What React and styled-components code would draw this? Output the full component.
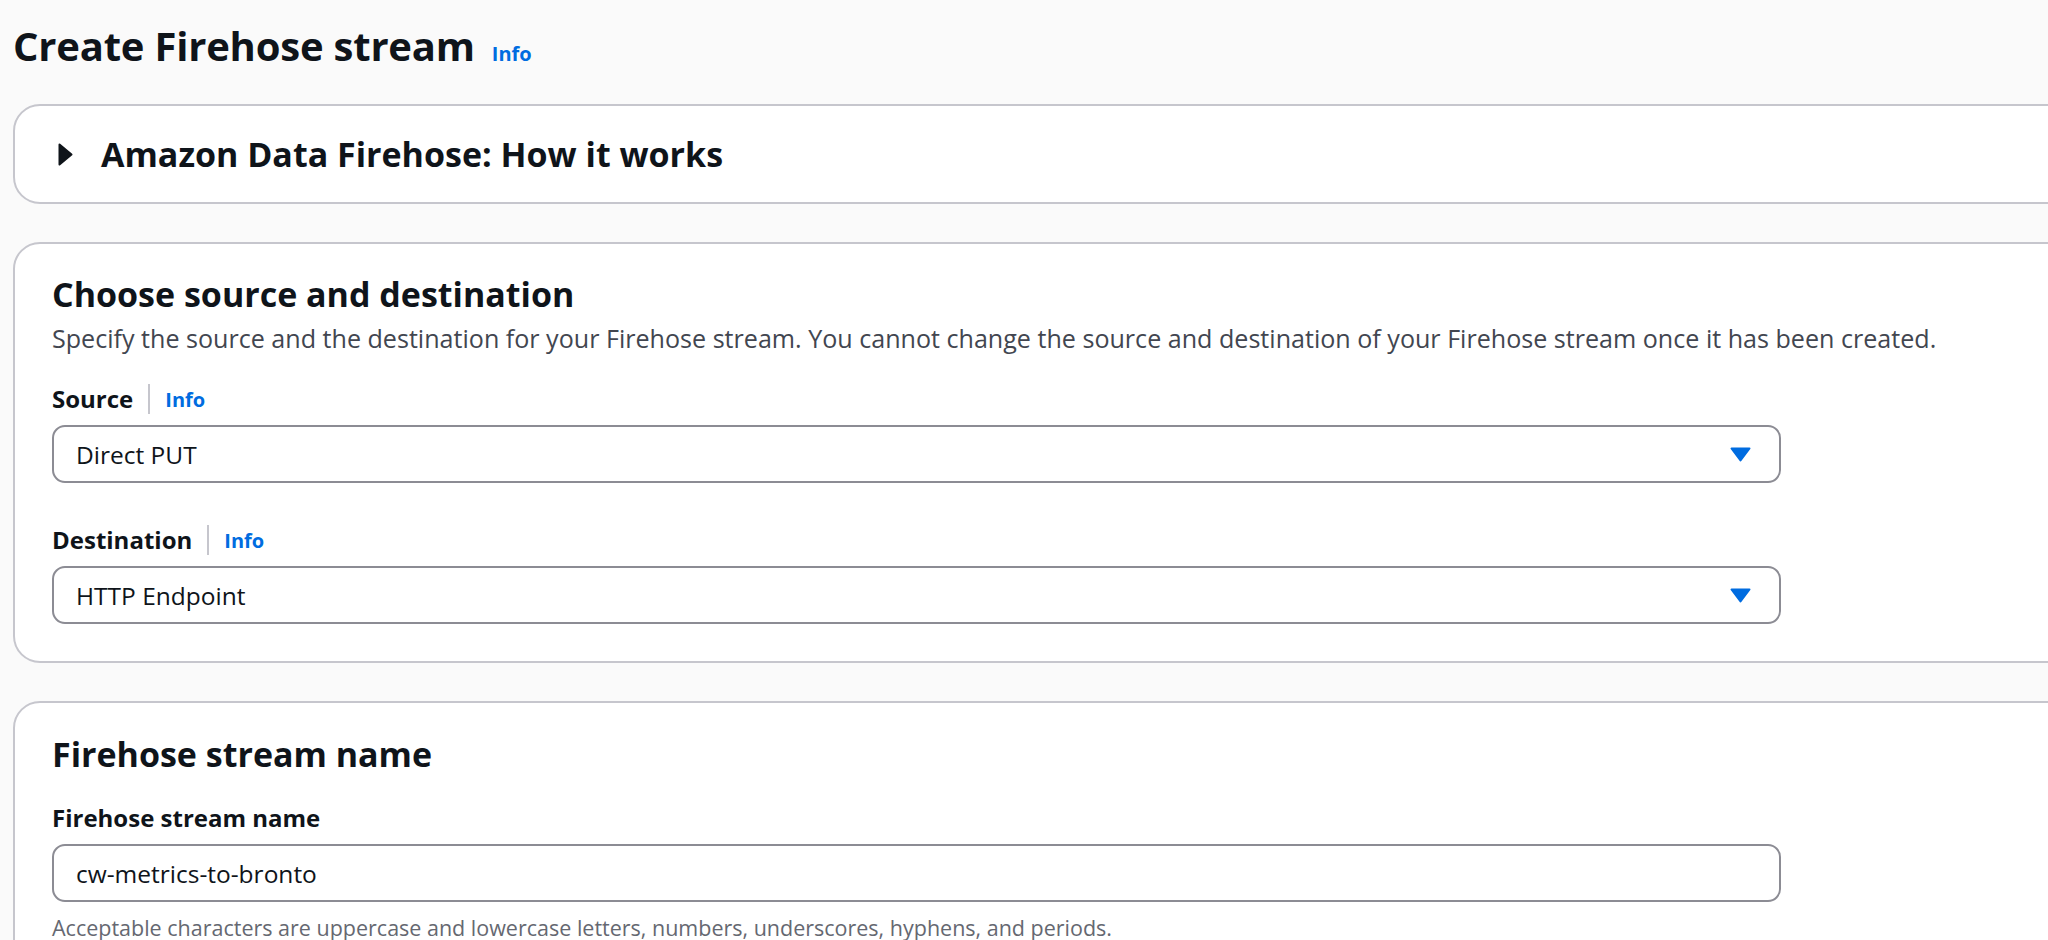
import React from "react";
import styled, { createGlobalStyle } from "styled-components";

const GlobalStyle = createGlobalStyle`
  html, body {
    margin: 0;
    padding: 0;
    background: #fafafa;
    overflow: hidden;
  }
  body {
    font-family: "Open Sans", "Noto Sans", "Liberation Sans", sans-serif;
    color: #0f141a;
  }
  * { box-sizing: border-box; }
`;

const Page = styled.main`
  width: 2120px;
  padding: 20px 0 0 13px;
  display: flex;
  flex-direction: column;
`;

const PageHeader = styled.header`
  display: flex;
  align-items: baseline;
  gap: 17px;
  margin-bottom: 33px;
`;

const Title = styled.h1`
  margin: 0;
  font-size: 40px;
  line-height: 51px;
  font-weight: 700;
  letter-spacing: -0.2px;
`;

const InfoLink = styled.a`
  font-size: 20px;
  line-height: 27px;
  font-weight: 700;
  color: #006ce0;
  text-decoration: none;
  cursor: pointer;
`;

const Stack = styled.div`
  display: flex;
  flex-direction: column;
  gap: 38px;
`;

const Card = styled.section`
  background: #fff;
  border: 2px solid #c6c6cd;
  border-radius: 27px;
  padding: ${(p) => p.$pad || "30px 37px 37px"};
`;

const ExpandHeader = styled.div`
  display: flex;
  align-items: center;
  gap: 28px;
`;

const Heading = styled.h2`
  margin: 0;
  font-size: 34px;
  line-height: 41px;
  font-weight: 700;
`;

const Description = styled.p`
  margin: 6px 0 0;
  font-size: 25.1px;
  line-height: 34px;
  color: #424650;
`;

const Fields = styled.div`
  display: flex;
  flex-direction: column;
  gap: 40px;
  margin-top: ${(p) => p.$top || "27px"};
`;

const Field = styled.div`
  display: flex;
  flex-direction: column;
  gap: 9px;
`;

const LabelRow = styled.div`
  display: flex;
  align-items: center;
`;

const Label = styled.label`
  font-size: 24px;
  line-height: 34px;
  font-weight: 700;
`;

const Divider = styled.span`
  width: 2px;
  height: 30px;
  background: #c6c6cd;
  margin: 0 15px;
`;

const Control = styled.div`
  width: 1729px;
  height: 58px;
  border: 2px solid #8c8c94;
  border-radius: 13px;
  background: #fff;
  display: flex;
  align-items: center;
  justify-content: space-between;
  padding: 0 28px 0 22px;
  font-size: 24.5px;
  color: #0f141a;
`;

const Hint = styled.div`
  margin-top: 3px;
  font-size: 21.5px;
  line-height: 27px;
  color: #656871;
`;

const Caret = () => (
  <svg width="21" height="15" viewBox="0 0 21 15">
    <path d="M1.5 1.5 L19.5 1.5 L10.5 13.5 Z" fill="#006ce0" stroke="#006ce0" strokeWidth="2" strokeLinejoin="round" />
  </svg>
);

const Expander = () => (
  <svg width="15" height="23" viewBox="0 0 15 23">
    <path d="M1.5 1.5 L13.5 11.5 L1.5 21.5 Z" fill="#0f141a" stroke="#0f141a" strokeWidth="2" strokeLinejoin="round" />
  </svg>
);

const SelectField = ({ label, value }) => (
  <Field>
    <LabelRow>
      <Label>{label}</Label>
      <Divider />
      <InfoLink>Info</InfoLink>
    </LabelRow>
    <Control>
      <span>{value}</span>
      <Caret />
    </Control>
  </Field>
);

export default function App() {
  return (
    <>
      <GlobalStyle />
      <Page>
        <PageHeader>
          <Title>Create Firehose stream</Title>
          <InfoLink>Info</InfoLink>
        </PageHeader>

        <Stack>
          <Card $pad="28px 37px 27px 43px">
            <ExpandHeader>
              <Expander />
              <Heading>Amazon Data Firehose: How it works</Heading>
            </ExpandHeader>
          </Card>

          <Card>
            <Heading>Choose source and destination</Heading>
            <Description>
              Specify the source and the destination for your Firehose stream. You cannot change the source and
              destination of your Firehose stream once it has been created.
            </Description>
            <Fields>
              <SelectField label="Source" value="Direct PUT" />
              <SelectField label="Destination" value="HTTP Endpoint" />
            </Fields>
          </Card>

          <Card $pad="31px 37px 37px">
            <Heading>Firehose stream name</Heading>
            <Fields $top="26px">
              <Field>
                <Label>Firehose stream name</Label>
                <Control>
                  <span>cw-metrics-to-bronto</span>
                </Control>
                <Hint>
                  Acceptable characters are uppercase and lowercase letters, numbers, underscores, hyphens, and periods.
                </Hint>
              </Field>
            </Fields>
          </Card>
        </Stack>
      </Page>
    </>
  );
}
